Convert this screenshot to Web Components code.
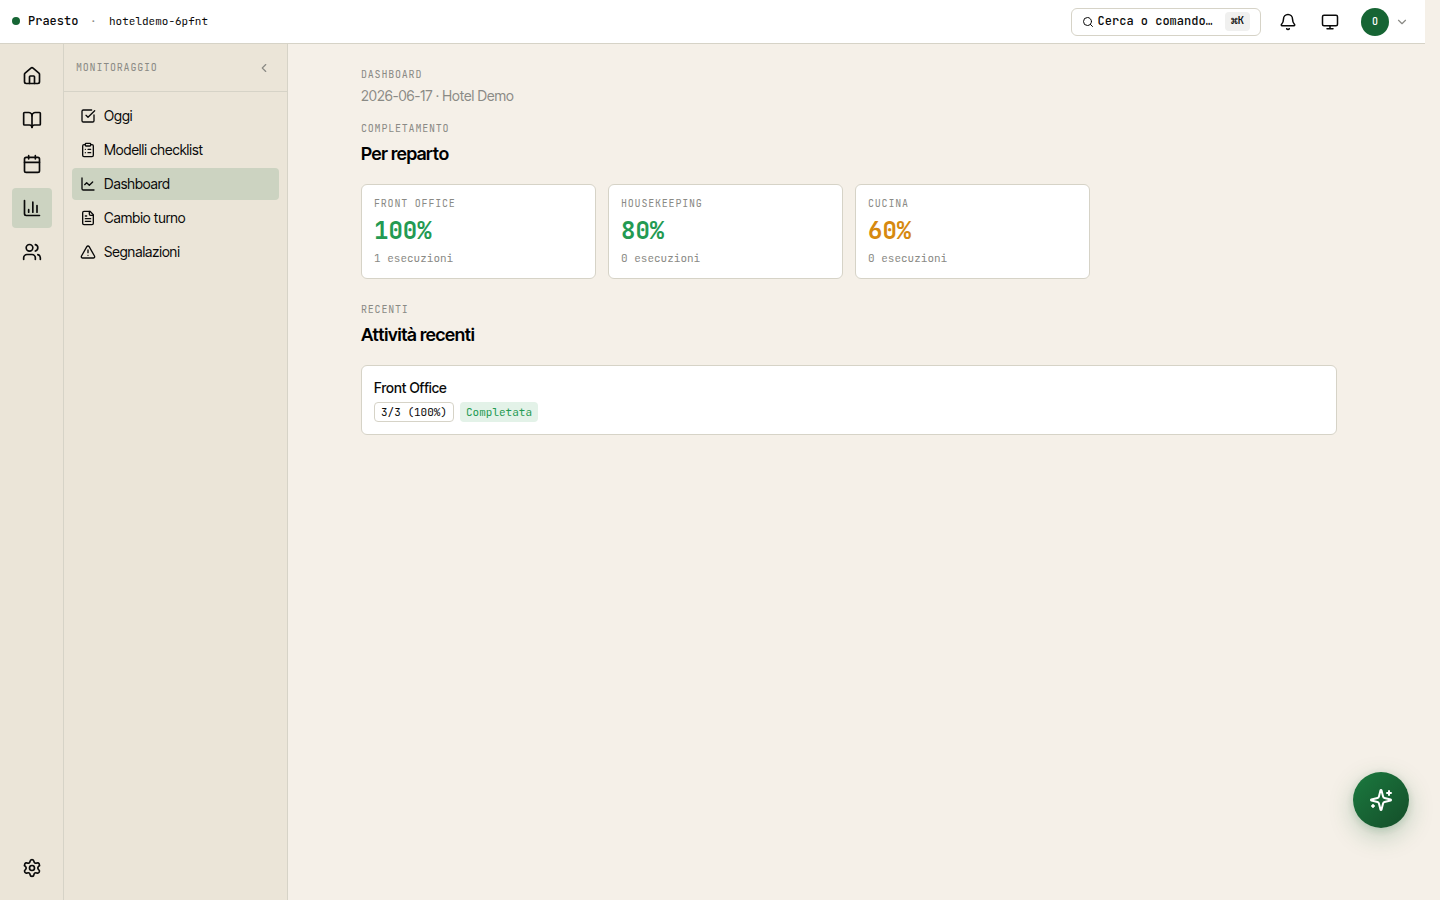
<!DOCTYPE html>
<html lang="it">
<head>
<meta charset="utf-8">
<title>Praesto</title>
<style>
:root{--line:#d6d3c7;--ink:#0a0a0a;--muted:#8a8a85;--side:#ebe5d8;--bg:#f5f0e8;--active:#ccd3c1;--green:#166534;
--mono:"JetBrains Mono","DejaVu Sans Mono","Liberation Mono",monospace;}
html,body{margin:0;height:100%;overflow:hidden;background:var(--bg)}
body{font-family:"Inter Tight",Inter,"Liberation Sans",sans-serif;font-size:14px;color:var(--ink)}
</style>
</head>
<body>
<praesto-app></praesto-app>
<script>
const ICONS={
home:'<path d="M15 21v-8a1 1 0 0 0-1-1h-4a1 1 0 0 0-1 1v8"/><path d="M3 10a2 2 0 0 1 .709-1.528l7-6a2 2 0 0 1 2.582 0l7 6A2 2 0 0 1 21 10v9a2 2 0 0 1-2 2H5a2 2 0 0 1-2-2z"/>',
book:'<path d="M12 7v14"/><path d="M3 18a1 1 0 0 1-1-1V4a1 1 0 0 1 1-1h5a4 4 0 0 1 4 4 4 4 0 0 1 4-4h5a1 1 0 0 1 1 1v13a1 1 0 0 1-1 1h-6a3 3 0 0 0-3 3 3 3 0 0 0-3-3z"/>',
calendar:'<path d="M8 2v4M16 2v4"/><rect width="18" height="18" x="3" y="4" rx="2"/><path d="M3 10h18"/>',
bars:'<path d="M3 3v16a2 2 0 0 0 2 2h16"/><path d="M18 17V9M13 17V5M8 17v-3"/>',
users:'<path d="M16 21v-2a4 4 0 0 0-4-4H6a4 4 0 0 0-4 4v2"/><path d="M16 3.128a4 4 0 0 1 0 7.744"/><path d="M22 21v-2a4 4 0 0 0-3-3.87"/><circle cx="9" cy="7" r="4"/>',
settings:'<path d="M9.671 4.136a2.34 2.34 0 0 1 4.659 0 2.34 2.34 0 0 0 3.319 1.915 2.34 2.34 0 0 1 2.33 4.033 2.34 2.34 0 0 0 0 3.831 2.34 2.34 0 0 1-2.33 4.033 2.34 2.34 0 0 0-3.319 1.915 2.34 2.34 0 0 1-4.659 0 2.34 2.34 0 0 0-3.32-1.915 2.34 2.34 0 0 1-2.33-4.033 2.34 2.34 0 0 0 0-3.831A2.34 2.34 0 0 1 6.35 6.051a2.34 2.34 0 0 0 3.319-1.915"/><circle cx="12" cy="12" r="3"/>',
left:'<path d="m15 18-6-6 6-6"/>',
down:'<path d="m6 9 6 6 6-6"/>',
check:'<path d="M21 10.5V19a2 2 0 0 1-2 2H5a2 2 0 0 1-2-2V5a2 2 0 0 1 2-2h12.5"/><path d="m9 11 3 3L22 4"/>',
clipboard:'<rect width="8" height="4" x="8" y="2" rx="1"/><path d="M16 4h2a2 2 0 0 1 2 2v14a2 2 0 0 1-2 2H6a2 2 0 0 1-2-2V6a2 2 0 0 1 2-2h2M12 11h4M12 16h4M8 11h.01M8 16h.01"/>',
line:'<path d="M3 3v16a2 2 0 0 0 2 2h16"/><path d="m19 9-5 5-4-4-3 3"/>',
file:'<path d="M15 2H6a2 2 0 0 0-2 2v16a2 2 0 0 0 2 2h12a2 2 0 0 0 2-2V7Z"/><path d="M14 2v4a2 2 0 0 0 2 2h4M10 9H8M16 13H8M16 17H8"/>',
alert:'<path d="m21.73 18-8-14a2 2 0 0 0-3.48 0l-8 14A2 2 0 0 0 4 21h16a2 2 0 0 0 1.73-3M12 9v4M12 17h.01"/>',
search:'<circle cx="11" cy="11" r="8"/><path d="m21 21-4.3-4.3"/>',
bell:'<path d="M10.268 21a2 2 0 0 0 3.464 0"/><path d="M3.262 15.326A1 1 0 0 0 4 17h16a1 1 0 0 0 .74-1.673C19.41 13.956 18 12.499 18 8A6 6 0 0 0 6 8c0 4.499-1.411 5.956-2.738 7.326"/>',
monitor:'<rect width="20" height="14" x="2" y="3" rx="2"/><path d="M8 21h8M12 17v4"/>',
sparkles:'<path d="M9.937 15.5A2 2 0 0 0 8.5 14.063l-6.135-1.582a.5.5 0 0 1 0-.962L8.5 9.936A2 2 0 0 0 9.937 8.5l1.582-6.135a.5.5 0 0 1 .963 0L14.063 8.5A2 2 0 0 0 15.5 9.937l6.135 1.581a.5.5 0 0 1 0 .964L15.5 14.063a2 2 0 0 0-1.437 1.437l-1.582 6.135a.5.5 0 0 1-.963 0z"/><path d="M20 3v4M22 5h-4M4 17v2M5 18H3"/>'
};
function define(name,render){
  customElements.define(name,class extends HTMLElement{
    constructor(){super();this.attachShadow({mode:'open'});}
    connectedCallback(){this.shadowRoot.innerHTML=render(this);}
  });
}
define('ui-icon',el=>{
  const s=el.getAttribute('size')||20;
  return `<style>:host{display:block;flex:none;width:${s}px;height:${s}px}svg{display:block}</style>
  <svg width="${s}" height="${s}" viewBox="0 0 24 24" fill="none" stroke="currentColor" stroke-width="2" stroke-linecap="round" stroke-linejoin="round">${ICONS[el.getAttribute('name')]}</svg>`;
});
define('ui-label',()=>`<style>:host{display:block;font:400 10px/15px var(--mono);letter-spacing:.8px;color:var(--muted);text-transform:uppercase;white-space:nowrap}</style><slot></slot>`);
define('top-bar',()=>`<style>
:host{display:flex;align-items:center;box-sizing:border-box;height:44px;width:1425px;padding:0 16px 0 12px;background:#fff;border-bottom:1px solid var(--line);font-family:var(--mono);white-space:nowrap}
.dot{width:8px;height:8px;border-radius:50%;background:var(--green);margin:-1px 8px 0 0}
b{font-size:12px;font-weight:500;width:51px;margin-top:-2px}
.sep{font-size:11px;color:var(--muted);width:7px;margin:-2px 12px 0 11px}
.org{font-size:11px;flex:1;margin-top:-2px}
.search{display:flex;align-items:center;box-sizing:border-box;width:190px;height:28px;border:1px solid var(--line);border-radius:6px;padding:0 10px;font-size:12px;font-weight:500;margin-right:18px}
.search span{margin:-2px auto 0 3.6px}
kbd{font:500 11px/17px var(--mono);height:19px;background:#f0f0ef;border-radius:4px;width:25px;text-align:center;margin-top:-1px}
.bell{margin-right:24px}.mon{margin-right:22px}
.av{width:28px;height:28px;border-radius:50%;background:var(--green);color:#fff;font:500 10px/28px var(--mono);text-align:center;margin-right:6px}
.down{color:var(--muted)}
</style><i class="dot"></i><b>Praesto</b><span class="sep">·</span><span class="org">hoteldemo-6pfnt</span>
<div class="search"><ui-icon name="search" size="12"></ui-icon><span>Cerca o comando…</span><kbd>⌘K</kbd></div>
<ui-icon class="bell" name="bell" size="18"></ui-icon><ui-icon class="mon" name="monitor" size="18"></ui-icon>
<div class="av">O</div><ui-icon class="down" name="down" size="14"></ui-icon>`);
define('rail-item',()=>`<style>:host{display:grid;place-items:center;width:40px;height:40px;border-radius:4px}:host([active]){background:var(--active)}</style><slot></slot>`);
define('nav-rail',()=>`<style>:host{display:flex;flex-direction:column;gap:4px;box-sizing:border-box;width:64px;padding:12px 11px 12px 12px;background:var(--side);border-right:1px solid var(--line)}.end{margin-top:auto}</style>
${['home','book','calendar','bars','users'].map(n=>`<rail-item ${n==='bars'?'active':''}><ui-icon name="${n}"></ui-icon></rail-item>`).join('')}
<rail-item class="end"><ui-icon name="settings"></ui-icon></rail-item>`);
define('nav-item',el=>`<style>:host{display:flex;align-items:center;gap:8px;height:32px;padding:0 8px;border-radius:4px;font-size:14px;line-height:20px;white-space:nowrap}:host([active]){background:var(--active)}</style>
<ui-icon name="${el.getAttribute('icon')}" size="16"></ui-icon><span><slot></slot></span>`);
define('side-panel',()=>`<style>:host{display:block;box-sizing:border-box;width:224px;background:var(--side);border-right:1px solid var(--line)}
header{display:flex;align-items:center;justify-content:space-between;box-sizing:border-box;height:48px;border-bottom:1px solid var(--line);padding:0 16px 0 12px;color:var(--muted)}
nav{display:flex;flex-direction:column;gap:2px;padding:8px}ui-icon{margin-top:1px}</style>
<header><ui-label>Monitoraggio</ui-label><ui-icon name="left" size="14"></ui-icon></header>
<nav><nav-item icon="check">Oggi</nav-item><nav-item icon="clipboard">Modelli checklist</nav-item><nav-item icon="line" active>Dashboard</nav-item><nav-item icon="file">Cambio turno</nav-item><nav-item icon="alert">Segnalazioni</nav-item></nav>`);
define('section-head',el=>`<style>:host{display:block}h2{margin:4px 0 0;font-size:18px;line-height:28px;font-weight:600;letter-spacing:-.27px;color:#000}</style><ui-label>${el.getAttribute('label')}</ui-label><h2><slot></slot></h2>`);
define('ui-card',()=>`<style>:host{display:block;box-sizing:border-box;background:#fff;border:1px solid var(--line);border-radius:6px;padding:12px}</style><slot></slot>`);
define('stat-card',el=>`<style>:host{display:block}ui-card{height:95px;padding-top:11px}
.v{font:600 24px/32px var(--mono);color:var(--tone);margin-top:4px}
.n{font:400 11px/16px var(--mono);color:var(--muted);margin-top:3px}</style>
<ui-card><ui-label>${el.getAttribute('label')}</ui-label><div class="v">${el.getAttribute('value')}</div><div class="n"><slot></slot></div></ui-card>`);
define('ui-badge',()=>`<style>:host{display:block;box-sizing:border-box;height:20px;padding:0 6px;border:1px solid var(--line);border-radius:4px;font:400 11px/18px var(--mono);white-space:nowrap}:host([done]){border:0;line-height:20px;background:#e3f2e8;color:#239a52}</style><slot></slot>`);
define('dash-main',()=>`<style>:host{display:block;flex:1;min-width:0}
main{width:976px;margin-left:73px;padding-top:23px}
.date{font-size:14px;line-height:20px;color:var(--muted);margin:4px 0 15px}
.cards{display:grid;grid-template-columns:repeat(4,1fr);gap:12px;margin:16px 0 23px}
.recent{height:70px;margin-top:16px}
.name{font-size:14px;line-height:20px;font-weight:500}
.tags{display:flex;gap:6px;margin-top:4px}</style>
<main><ui-label>Dashboard</ui-label><div class="date">2026-06-17 · Hotel Demo</div>
<section-head label="Completamento">Per reparto</section-head>
<div class="cards"><stat-card label="Front Office" value="100%" style="--tone:#239a52">1 esecuzioni</stat-card><stat-card label="Housekeeping" value="80%" style="--tone:#239a52">0 esecuzioni</stat-card><stat-card label="Cucina" value="60%" style="--tone:#d68910">0 esecuzioni</stat-card></div>
<section-head label="Recenti">Attività recenti</section-head>
<ui-card class="recent"><div class="name">Front Office</div><div class="tags"><ui-badge>3/3 (100%)</ui-badge><ui-badge done>Completata</ui-badge></div></ui-card></main>`);
define('assist-button',()=>`<style>:host{position:fixed;right:31px;bottom:72px;width:56px;height:56px;border-radius:50%;display:grid;place-items:center;color:#fff;background:linear-gradient(135deg,#1b7a3f,#144d29);box-shadow:0 8px 24px rgba(22,101,52,.25),0 2px 8px rgba(22,101,52,.15)}</style><ui-icon name="sparkles" size="24"></ui-icon>`);
define('praesto-app',()=>`<style>:host{display:flex;flex-direction:column;height:100vh}.body{display:flex;flex:1;min-height:0}</style>
<top-bar></top-bar><div class="body"><nav-rail></nav-rail><side-panel></side-panel><dash-main></dash-main></div><assist-button></assist-button>`);
</script>
</body>
</html>
